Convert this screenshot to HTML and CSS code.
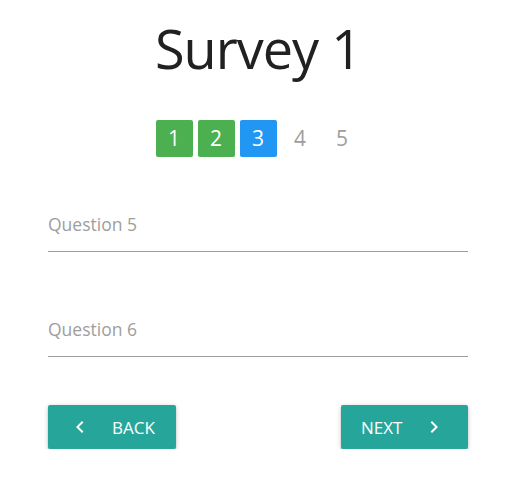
FILE: index.html
```html
<!DOCTYPE html>
<html>
<head>
<meta charset="utf-8">
<link rel="stylesheet" href="styles.css">
</head>
<body>
<div class="page">
  <h1 class="title">Survey 1</h1>
  <div class="steps">
    <span class="step done">1</span>
    <span class="step done">2</span>
    <span class="step current">3</span>
    <span class="step">4</span>
    <span class="step">5</span>
  </div>
  <div class="field first"><label class="label">Question 5</label></div>
  <div class="field"><label class="label">Question 6</label></div>
  <div class="actions">
    <button class="btn back"><svg class="icon" viewBox="0 0 24 24" width="24" height="24"><path d="M15.41 7.41L14 6l-6 6 6 6 1.41-1.41L10.83 12z" fill="#fff"/></svg><span>BACK</span></button>
    <button class="btn next"><span>NEXT</span><svg class="icon" viewBox="0 0 24 24" width="24" height="24"><path d="M10 6L8.59 7.41 13.17 12l-4.58 4.59L10 18l6-6z" fill="#fff"/></svg></button>
  </div>
</div>
</body>
</html>
```
FILE: styles.css
```css
html, body { margin: 0; padding: 0; background: #fff; }
body { font-family: "Open Sans", "Noto Sans", sans-serif; }
.page { width: 420px; margin-left: 48px; }
.title {
  margin: 0;
  padding-top: 20px;
  font-size: 54px;
  line-height: 56px;
  font-weight: 400;
  color: #212121;
  text-align: center;
  letter-spacing: -1px;
}
.steps {
  margin-top: 44px;
  display: flex;
  justify-content: center;
  gap: 5px;
}
.step {
  width: 37px;
  height: 37px;
  line-height: 37px;
  text-align: center;
  font-size: 21px;
  color: #9e9e9e;
  border-radius: 2px;
}
.step.done { background: #4caf50; color: #fff; }
.step.current { background: #2196f3; color: #fff; }
.field {
  margin-top: 67px;
  padding-bottom: 17px;
  border-bottom: 1px solid #9e9e9e;
}
.field.first { margin-top: 57px; }
.label {
  display: block;
  font-size: 17.5px;
  line-height: 20px;
  color: #9e9e9e;
}
.actions {
  margin-top: 48px;
  display: flex;
  justify-content: space-between;
}
.btn {
  display: flex;
  align-items: center;
  gap: 20px;
  height: 44px;
  padding: 0 20px;
  border: none;
  border-radius: 2px;
  background: #26a69a;
  color: #fff;
  font-family: inherit;
  font-size: 17px;
  box-shadow: 0 2px 2px 0 rgba(0,0,0,0.14), 0 3px 1px -2px rgba(0,0,0,0.12), 0 1px 5px 0 rgba(0,0,0,0.2);
}
.btn.back { width: 128px; }
.btn.next { width: 127px; padding-right: 21px; }
.icon { display: block; flex: none; }
```
